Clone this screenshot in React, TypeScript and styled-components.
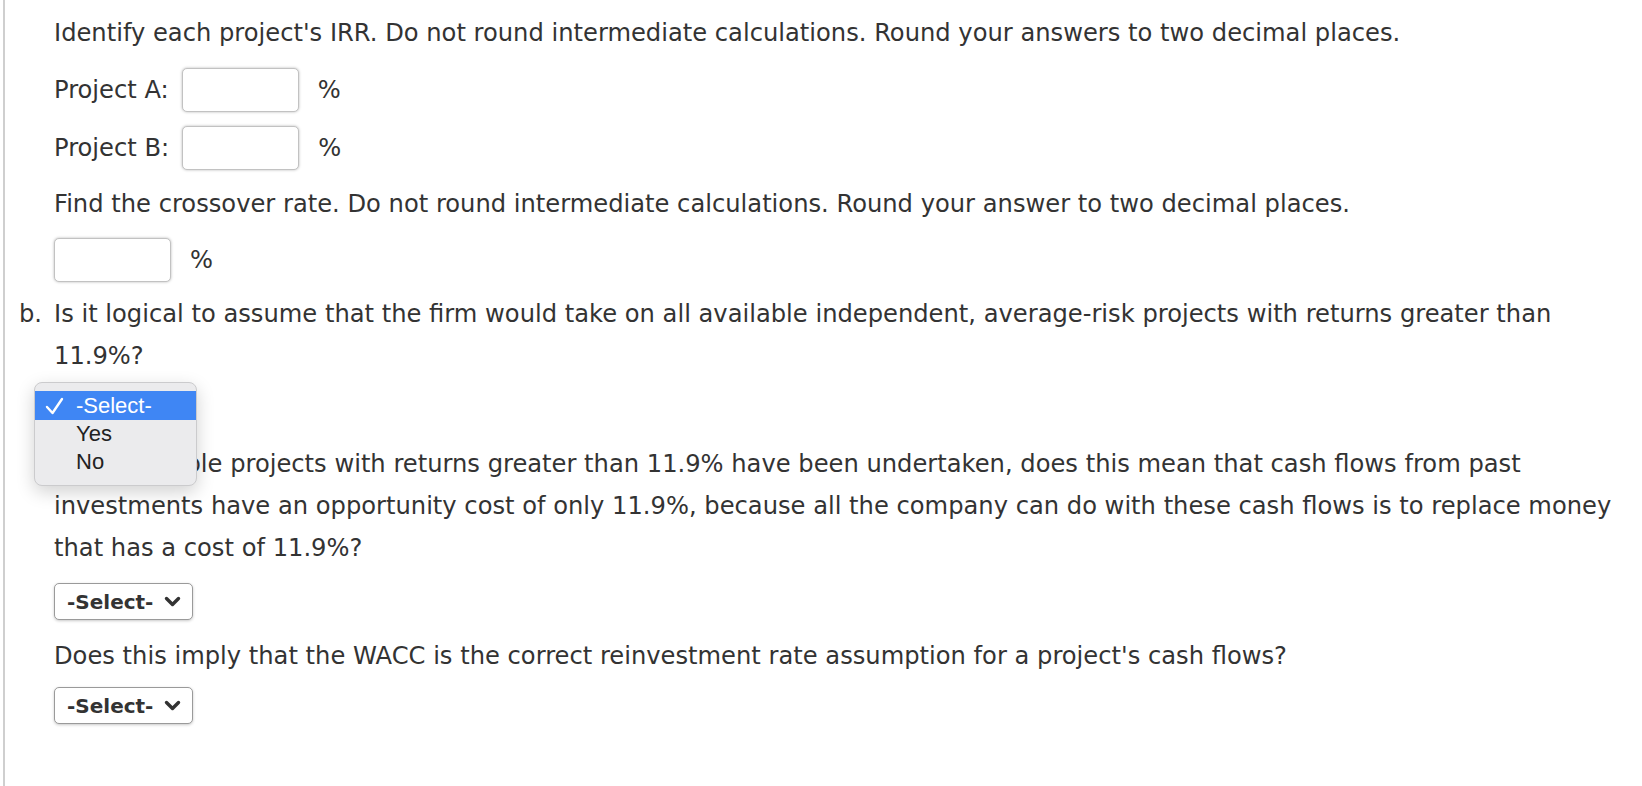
import styled, { createGlobalStyle } from "styled-components";

const GlobalStyle = createGlobalStyle`
  body {
    margin: 0;
    background: #fff;
    font-family: "DejaVu Sans", Verdana, sans-serif;
    color: #333;
  }
`;

export default function App() {
  return (
    <>
      <GlobalStyle />
      <Page>
        <Text>
          Identify each project's IRR. Do not round intermediate calculations. Round your answers to two decimal places.
        </Text>
        <AnswerRow $top={14}>
          <RowLabel>Project A:</RowLabel>
          <NumberBox />
          <Unit>%</Unit>
        </AnswerRow>
        <AnswerRow $top={14}>
          <RowLabel>Project B:</RowLabel>
          <NumberBox />
          <Unit>%</Unit>
        </AnswerRow>
        <Text $top={13}>
          Find the crossover rate. Do not round intermediate calculations. Round your answer to two decimal places.
        </Text>
        <AnswerRow $top={13}>
          <NumberBox />
          <Unit>%</Unit>
        </AnswerRow>
        <Question $top={11}>
          <Letter>b.</Letter>
          <Text>
            Is it logical to assume that the firm would take on all available independent, average-risk projects with
            returns greater than 11.9%?
          </Text>
        </Question>
        <SelectSlot $top={9}>
          <Dropdown />
          <Menu>
            <MenuItem $active>
              <Check>
                <svg width="19" height="18" viewBox="0 0 19 18">
                  <polyline points="2,10 7.5,16 17,2" fill="none" stroke="#fff" strokeWidth="2.4" strokeLinecap="round" strokeLinejoin="round" />
                </svg>
              </Check>
              -Select-
            </MenuItem>
            <MenuItem>Yes</MenuItem>
            <MenuItem>No</MenuItem>
          </Menu>
        </SelectSlot>
        <Text $top={20}>
          If all available projects with returns greater than 11.9% have been undertaken, does this mean that cash flows
          from past investments have an opportunity cost of only 11.9%, because all the company can do with these cash
          flows is to replace money that has a cost of 11.9%?
        </Text>
        <SelectSlot $top={14}>
          <Dropdown />
        </SelectSlot>
        <Text $top={15}>
          Does this imply that the WACC is the correct reinvestment rate assumption for a project's cash flows?
        </Text>
        <SelectSlot $top={10}>
          <Dropdown />
        </SelectSlot>
      </Page>
    </>
  );
}

function Dropdown() {
  return (
    <SelectBox>
      <SelectText>-Select-</SelectText>
      <svg width="17" height="11" viewBox="0 0 17 11">
        <polyline points="2.5,2.5 8.5,8.5 14.5,2.5" fill="none" stroke="#333" strokeWidth="3.4" strokeLinecap="round" strokeLinejoin="round" />
      </svg>
    </SelectBox>
  );
}

const Page = styled.div`
  margin-left: 3px;
  min-height: 786px;
  box-sizing: border-box;
  border-left: 2px solid #cfcfcf;
  padding: 12px 14px 0 49px;
  display: flex;
  flex-direction: column;
  align-items: flex-start;
`;

const Text = styled.p<{ $top?: number }>`
  margin: ${({ $top }) => $top ?? 0}px 0 0;
  font-size: 24.2px;
  line-height: 42px;
`;

const AnswerRow = styled.div<{ $top: number }>`
  display: flex;
  align-items: center;
  margin-top: ${({ $top }) => $top}px;
  font-size: 24.2px;
`;

const RowLabel = styled.span`
  margin-right: 13px;
`;

const NumberBox = styled.div`
  width: 117px;
  height: 44px;
  box-sizing: border-box;
  border: 1px solid #c2c2c2;
  border-radius: 5px;
  box-shadow: 0 0 3px rgba(0, 0, 0, 0.28);
  background: #fff;
`;

const Unit = styled.span`
  margin-left: 19px;
`;

const Question = styled.div<{ $top: number }>`
  display: flex;
  margin: ${({ $top }) => $top}px 0 0 -35px;
`;

const Letter = styled.span`
  flex: 0 0 35px;
  font-size: 24.2px;
  line-height: 42px;
`;

const SelectSlot = styled.div<{ $top: number }>`
  position: relative;
  margin-top: ${({ $top }) => $top}px;
`;

const SelectBox = styled.div`
  display: flex;
  align-items: center;
  gap: 11px;
  width: 139px;
  height: 37px;
  box-sizing: border-box;
  padding: 0 6px 0 12px;
  border: 1px solid #9a9a9a;
  border-radius: 5px;
  box-shadow: 0 1px 3px rgba(0, 0, 0, 0.22);
  background: #fff;

  svg {
    flex-shrink: 0;
  }
`;

const SelectText = styled.span`
  white-space: nowrap;
  font-size: 20px;
  font-weight: bold;
  color: #333;
`;

const Menu = styled.div`
  position: absolute;
  left: -20px;
  top: -4px;
  width: 163px;
  box-sizing: border-box;
  padding: 8px 0 9px;
  background: #ebebed;
  border: 1px solid #cbcbcd;
  border-radius: 8px;
  box-shadow: 0 6px 18px rgba(0, 0, 0, 0.18);
  font-family: "Liberation Sans", Arial, sans-serif;
`;

const MenuItem = styled.div<{ $active?: boolean }>`
  display: flex;
  align-items: center;
  height: ${({ $active }) => ($active ? 29 : 28)}px;
  padding-left: 41px;
  font-size: 22px;
  color: ${({ $active }) => ($active ? "#fff" : "#222")};
  background: ${({ $active }) => ($active ? "#3f86f4" : "transparent")};
  position: relative;
`;

const Check = styled.span`
  position: absolute;
  left: 10px;
  top: 6px;
  display: flex;
`;
